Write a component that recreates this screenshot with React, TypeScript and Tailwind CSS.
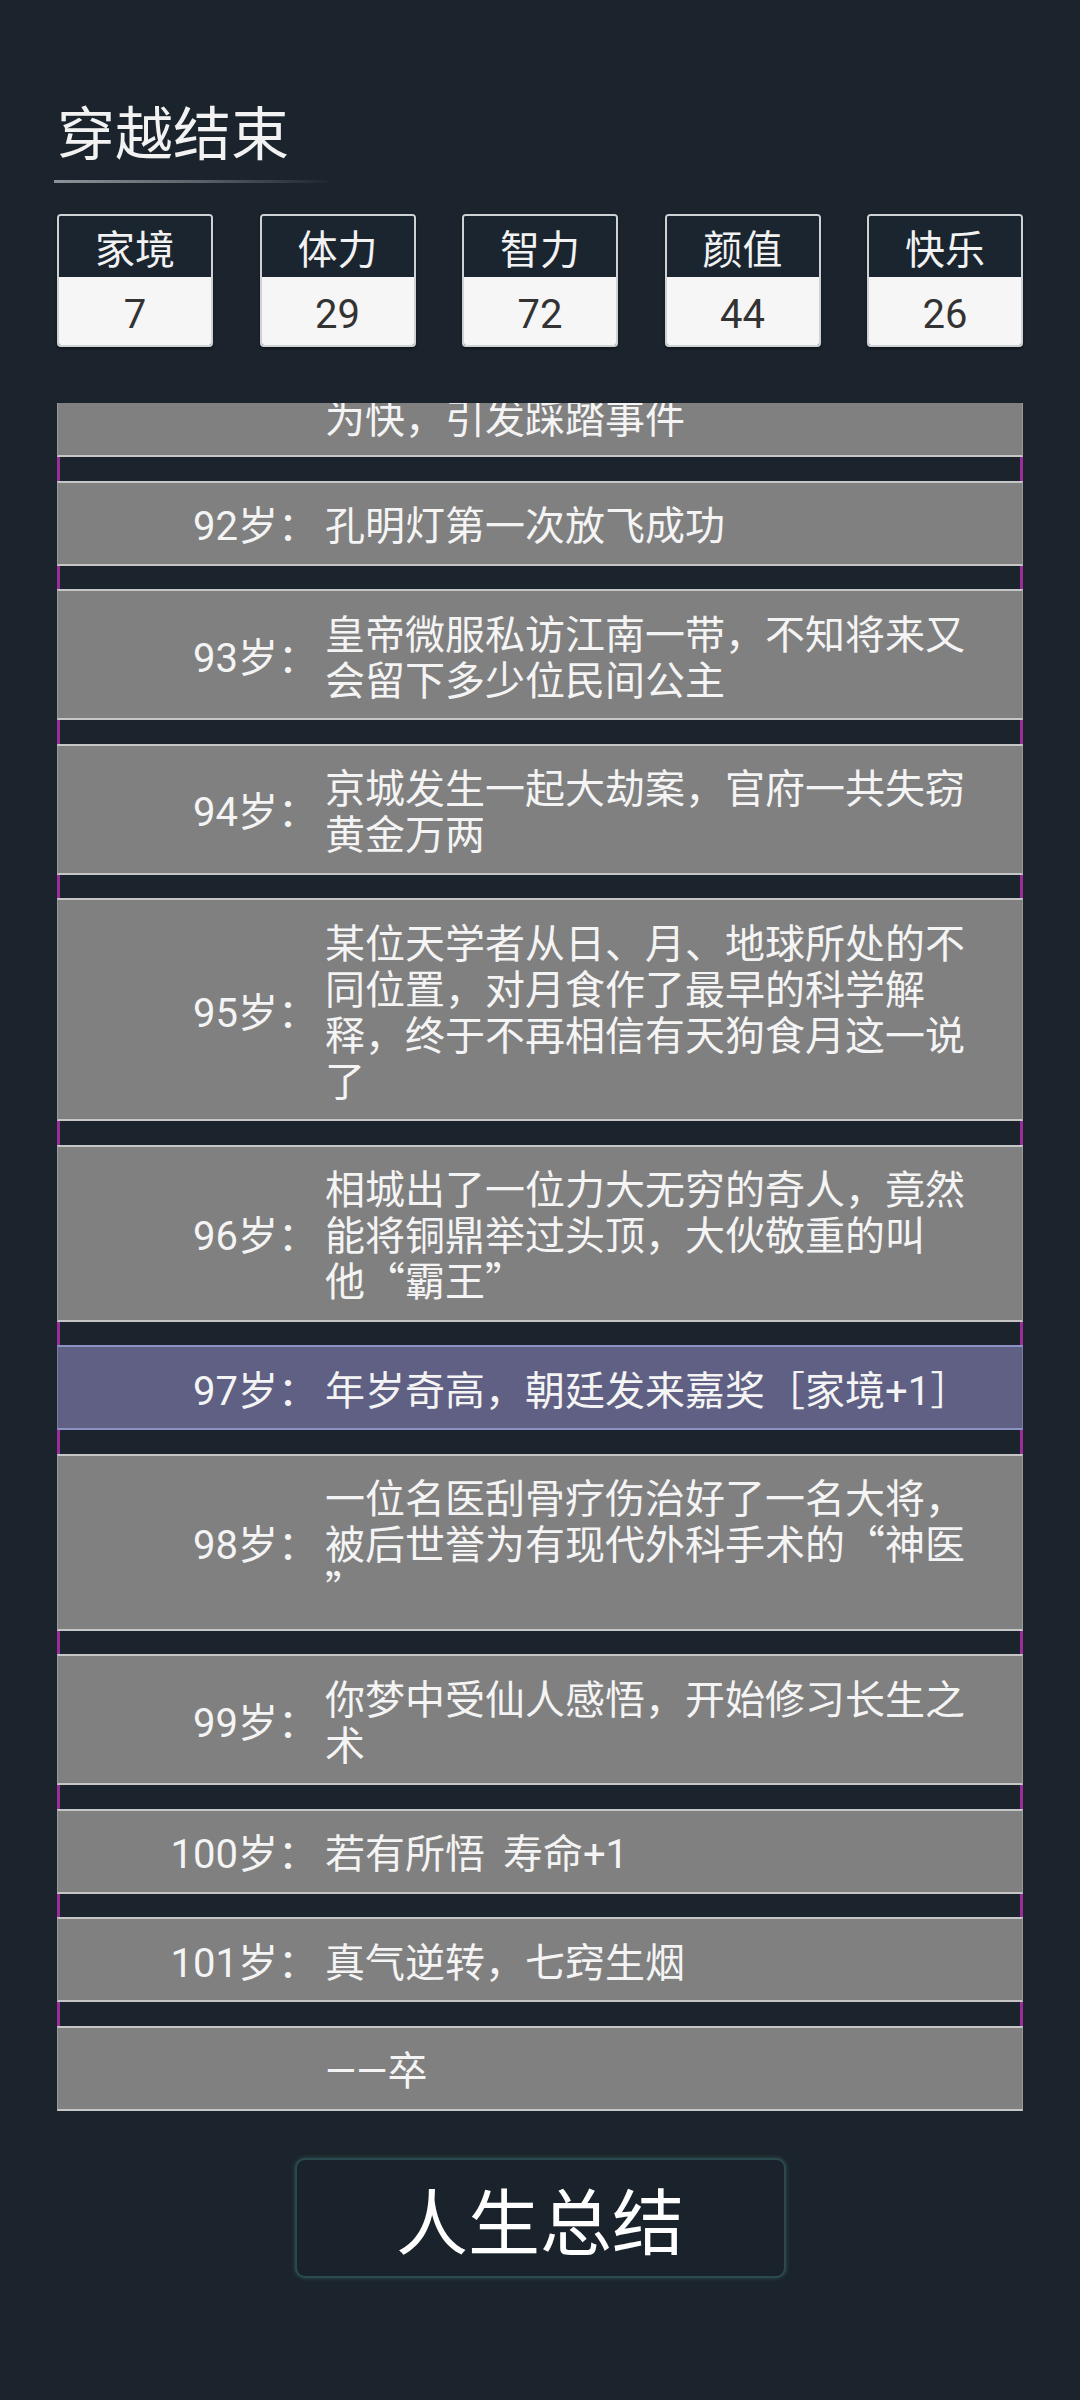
import React from "react";

const stats = [
  { label: "家境", value: "7" },
  { label: "体力", value: "29" },
  { label: "智力", value: "72" },
  { label: "颜值", value: "44" },
  { label: "快乐", value: "26" },
];

type Entry = { age: string; lines: string[]; highlight?: boolean };

const entries: Entry[] = [
  { age: "92岁：", lines: ["孔明灯第一次放飞成功"] },
  { age: "93岁：", lines: ["皇帝微服私访江南一带，不知将来又", "会留下多少位民间公主"] },
  { age: "94岁：", lines: ["京城发生一起大劫案，官府一共失窃", "黄金万两"] },
  {
    age: "95岁：",
    lines: [
      "某位天学者从日、月、地球所处的不",
      "同位置，对月食作了最早的科学解",
      "释，终于不再相信有天狗食月这一说",
      "了",
    ],
  },
  {
    age: "96岁：",
    lines: ["相城出了一位力大无穷的奇人，竟然", "能将铜鼎举过头顶，大伙敬重的叫", "他“霸王”"],
  },
  { age: "97岁：", lines: ["年岁奇高，朝廷发来嘉奖［家境+1］"], highlight: true },
  {
    age: "98岁：",
    lines: ["一位名医刮骨疗伤治好了一名大将，", "被后世誉为有现代外科手术的“神医", "”"],
  },
  { age: "99岁：", lines: ["你梦中受仙人感悟，开始修习长生之", "术"] },
  { age: "100岁：", lines: ["若有所悟  寿命+1"] },
  { age: "101岁：", lines: ["真气逆转，七窍生烟"] },
  { age: "", lines: ["——卒"] },
];

// digits and dashes come from Roboto, the rest from the CJK face
function Mixed({ text }: { text: string }) {
  const parts = text.split(/([0-9+—]+)/);
  return (
    <>
      {parts.map((p, i) =>
        /^[0-9+—]+$/.test(p) ? (
          <span key={i} className="font-[Roboto] leading-[0]">
            {p}
          </span>
        ) : (
          <React.Fragment key={i}>{p}</React.Fragment>
        )
      )}
    </>
  );
}

function Gap() {
  return <div className="h-[23.5px] border-x-[3px] border-[#9b2d9b]" />;
}

function Row({ entry }: { entry: Entry }) {
  const tone = entry.highlight
    ? "bg-[#5f6083] border-y-[#8c90c4] border-x-[#7a7ca0]"
    : "bg-[#808080] border-y-[#c6c6c6] border-x-[#9a9a9a]";
  return (
    <div className={`flex items-center border-x border-y-2 py-[17.5px] ${tone}`}>
      <div className="w-[267px] shrink-0 pr-[7px] text-right leading-[46px]">
        <Mixed text={entry.age} />
      </div>
      <div className="leading-[46px]">
        {entry.lines.map((line, i) => (
          <div key={i} className="whitespace-pre">
            <Mixed text={line} />
          </div>
        ))}
      </div>
    </div>
  );
}

export default function App() {
  return (
    <div
      className="min-h-[2400px] bg-[#1b242d] px-[57px] pt-[101px] text-[#f4f4f4]"
      style={{ fontFamily: '"Noto Sans CJK SC", "Noto Sans", sans-serif' }}
    >
      <h1 className="text-[58px] leading-none font-normal text-[#f2f2f2]">穿越结束</h1>
      <div className="mt-[21px] -ml-[3px] h-[3px] w-[280px] bg-linear-to-r from-[#8d9499] via-[#5d646a] to-transparent" />

      <div className="mt-[31px] flex justify-between">
        {stats.map((s) => (
          <div
            key={s.label}
            className="w-[156px] overflow-hidden rounded-[4px] border-2 border-[#cfd2d5] shadow-[0_2px_3px_rgba(0,0,0,0.4)]"
          >
            <div className="flex h-[61px] items-center justify-center bg-[#1b2530] text-[40px] leading-none text-[#f2f2f2]">
              {s.label}
            </div>
            <div className="flex h-[68px] items-center justify-center bg-[#f6f6f6] text-[40px] leading-none text-[#333333]">
              <div>
                <Mixed text={s.value} />
              </div>
            </div>
          </div>
        ))}
      </div>

      <div className="mt-[56px] flex flex-col text-[40px]">
        <div className="h-[54px] overflow-hidden border-x border-b-2 border-x-[#9a9a9a] border-b-[#c6c6c6] bg-[#808080]">
          <div className="-mt-[10px] pl-[267px] leading-[46px]">为快，引发踩踏事件</div>
        </div>
        {entries.map((e, i) => (
          <React.Fragment key={i}>
            <Gap />
            <Row entry={e} />
          </React.Fragment>
        ))}
      </div>

      <div className="mt-[47px] flex justify-center">
        <button className="flex h-[120px] w-[491px] items-center justify-center rounded-[10px] border-2 border-[#2b4a4f] bg-[#1a232b] text-[72px] leading-none text-white shadow-[0_0_4px_rgba(70,140,120,0.45)]">
          人生总结
        </button>
      </div>
    </div>
  );
}
